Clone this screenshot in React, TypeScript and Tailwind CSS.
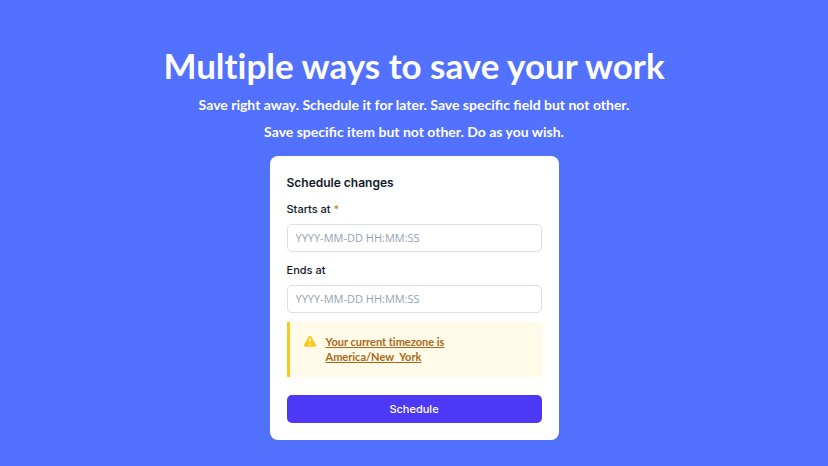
import { useState } from 'react';

interface DateFieldProps {
  id: string;
  label: string;
  value: string;
  required?: boolean;
  onChange: (value: string) => void;
}

function DateField({ id, label, value, required, onChange }: DateFieldProps) {
  return (
    <div>
      <label htmlFor={id} className="block text-[11px] leading-4 font-medium text-gray-900">
        {label}
        {required && <span className="text-[#c8862f]"> *</span>}
      </label>
      <input
        id={id}
        type="text"
        value={value}
        required={required}
        placeholder="YYYY-MM-DD HH:MM:SS"
        onChange={(e) => onChange(e.target.value)}
        className="mt-[7px] block h-7 w-full rounded-[5px] border border-[#dcdde6] bg-white px-2 pb-0.5 font-['Open_Sans',sans-serif] text-[11px] text-gray-900 placeholder:text-gray-400 focus:border-indigo-500 focus:outline-none"
      />
    </div>
  );
}

function WarningIcon() {
  return (
    <svg className="h-4 w-4 shrink-0 text-[#fcc81f]" viewBox="0 0 20 20" fill="currentColor" aria-hidden="true">
      <path
        fillRule="evenodd"
        clipRule="evenodd"
        d="M8.257 3.099c.765-1.36 2.722-1.36 3.486 0l5.58 9.92c.75 1.334-.213 2.98-1.742 2.98H4.42c-1.53 0-2.493-1.646-1.743-2.98l5.58-9.92zM11 13a1 1 0 11-2 0 1 1 0 012 0zm-1-8a1 1 0 00-1 1v3a1 1 0 002 0V6a1 1 0 00-1-1z"
      />
    </svg>
  );
}

function ScheduleForm() {
  const [startsAt, setStartsAt] = useState('');
  const [endsAt, setEndsAt] = useState('');

  return (
    <form
      onSubmit={(e) => e.preventDefault()}
      className="w-full max-w-[289px] rounded-lg bg-white p-[17px] font-['Inter',sans-serif]"
    >
      <h2 className="text-[12px] leading-5 font-semibold text-gray-900">Schedule changes</h2>

      <div className="mt-2 space-y-[10px]">
        <DateField id="starts-at" label="Starts at" value={startsAt} onChange={setStartsAt} required />
        <DateField id="ends-at" label="Ends at" value={endsAt} onChange={setEndsAt} />
      </div>

      <div className="mt-[9px] flex gap-2 border-l-[3px] border-[#fcc81f] bg-[#fffbe8] px-3 pt-3 pb-[13px]">
        <WarningIcon />
        <a
          href="#timezone"
          className="max-w-[150px] font-['Lato',sans-serif] text-[11px] leading-[15px] font-bold text-[#ab6718] underline [font-variant-ligatures:none]"
        >
          Your current timezone is America/New_York
        </a>
      </div>

      <button
        type="submit"
        className="mt-[18px] h-7 w-full rounded-[5px] bg-[#4d38f5] text-[11px] font-medium text-white hover:bg-indigo-700"
      >
        Schedule
      </button>
    </form>
  );
}

export default function App() {
  return (
    <main className="flex min-h-screen flex-col items-center bg-[#5271ff] px-4 pt-[43px] pb-6">
      <header className="text-center font-['Lato',sans-serif] font-bold text-white">
        <h1 className="text-[35px] leading-[44px] [font-variant-ligatures:none]">Multiple ways to save your work</h1>
        <p className="mt-1 text-[14px] leading-[27px]">
          Save right away. Schedule it for later. Save specific field but not other.
          <br />
          Save specific item but not other. Do as you wish.
        </p>
      </header>
      <div className="mt-[11px] flex w-full justify-center">
        <ScheduleForm />
      </div>
    </main>
  );
}
